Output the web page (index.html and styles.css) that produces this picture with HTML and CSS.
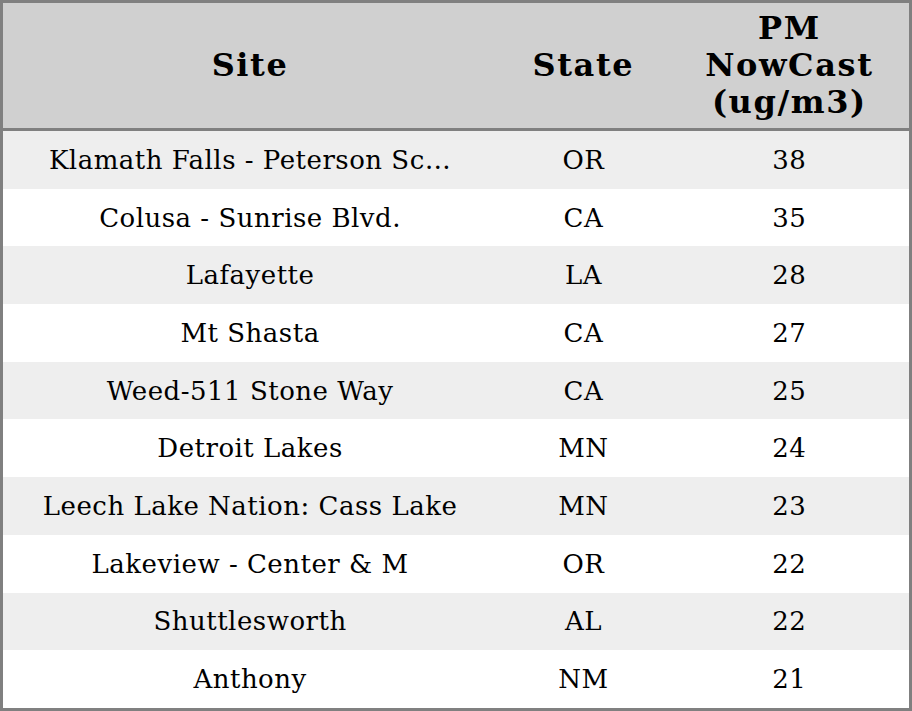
FILE: index.html
```html
<!DOCTYPE html>
<html>
<head>
<meta charset="utf-8">
<link rel="stylesheet" href="styles.css">
</head>
<body>
<table class="aq-table">
  <colgroup>
    <col class="col-site">
    <col class="col-state">
    <col class="col-pm">
  </colgroup>
  <thead>
    <tr class="head-row">
      <th>Site</th>
      <th>State</th>
      <th>PM<br>NowCast<br>(ug/m3)</th>
    </tr>
  </thead>
  <tbody>
    <tr><td>Klamath Falls - Peterson Sc…</td><td>OR</td><td>38</td></tr>
    <tr><td>Colusa - Sunrise Blvd.</td><td>CA</td><td>35</td></tr>
    <tr><td>Lafayette</td><td>LA</td><td>28</td></tr>
    <tr><td>Mt Shasta</td><td>CA</td><td>27</td></tr>
    <tr><td>Weed-511 Stone Way</td><td>CA</td><td>25</td></tr>
    <tr><td>Detroit Lakes</td><td>MN</td><td>24</td></tr>
    <tr><td>Leech Lake Nation: Cass Lake</td><td>MN</td><td>23</td></tr>
    <tr><td>Lakeview - Center &amp; M</td><td>OR</td><td>22</td></tr>
    <tr><td>Shuttlesworth</td><td>AL</td><td>22</td></tr>
    <tr><td>Anthony</td><td>NM</td><td>21</td></tr>
  </tbody>
</table>
</body>
</html>
```

FILE: styles.css
```css
html, body {
  margin: 0;
  padding: 0;
  background: #ffffff;
}

.aq-table {
  width: 912px;
  border-collapse: collapse;
  table-layout: fixed;
  border: 3px solid #808080;
  font-family: "DejaVu Serif", serif;
  color: #000;
}

.col-site { width: 494px; }
.col-state { width: 172px; }
.col-pm { width: 240px; }

.aq-table th {
  background: #d0d0d0;
  font-size: 32px;
  font-weight: bold;
  letter-spacing: 1.6px;
  height: 125px;
  padding: 0;
  text-align: center;
  vertical-align: middle;
  border-bottom: 3px solid #808080;
  line-height: 37px;
}

.aq-table td {
  font-size: 26px;
  letter-spacing: 0.5px;
  height: 57.7px;
  padding: 0;
  text-align: center;
  vertical-align: middle;
  white-space: nowrap;
}

.aq-table tbody tr:nth-child(odd) {
  background: #eeeeee;
}

.aq-table tbody tr:nth-child(even) {
  background: #ffffff;
}
```
